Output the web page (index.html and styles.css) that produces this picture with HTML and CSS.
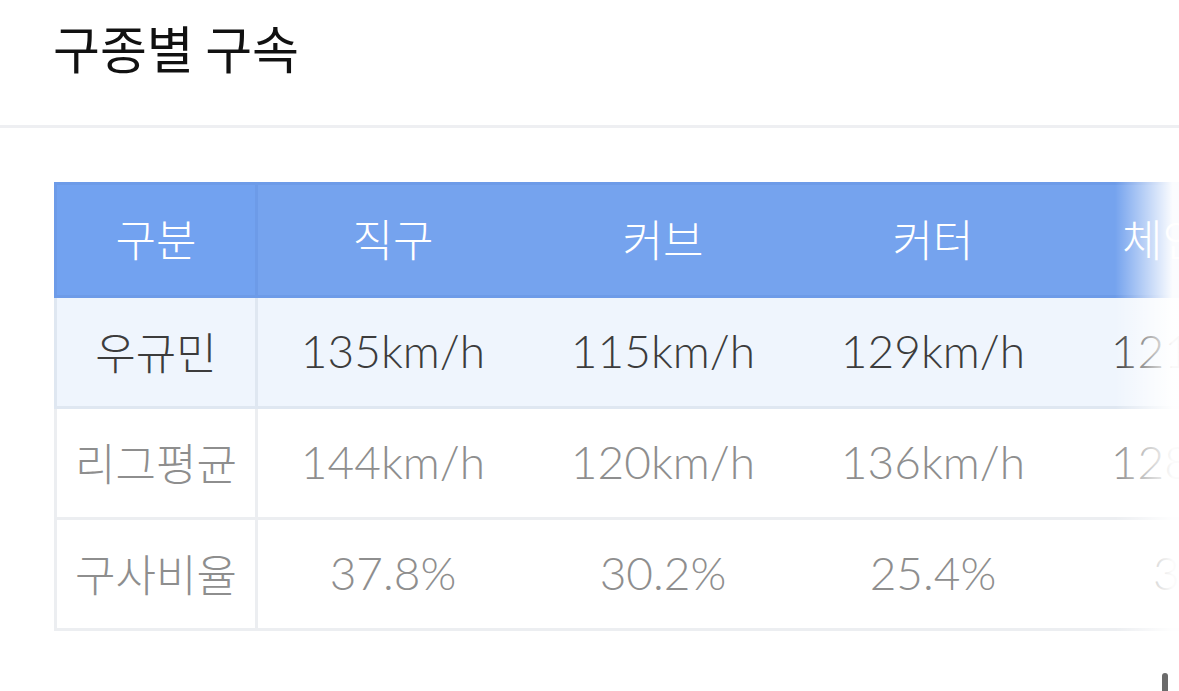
FILE: index.html
```html
<html>
   <head>
      <title>구종별 구속</title>
      <link rel="stylesheet" href="styles.css">
   </head>
   <body>
      <div class="header">
         <h1 class="title">구종별 구속</h1>
      </div>
      <div class="section">
         <div class="tablewrap">
            <table class="speed">
               <thead>
                  <tr>
                     <th class="label">구분</th>
                     <th>직구</th>
                     <th>커브</th>
                     <th>커터</th>
                     <th>체인지업</th>
                  </tr>
               </thead>
               <tbody>
                  <tr class="player">
                     <td class="label">우규민</td>
                     <td>135km/h</td>
                     <td>115km/h</td>
                     <td>129km/h</td>
                     <td>121km/h</td>
                  </tr>
                  <tr>
                     <td class="label">리그평균</td>
                     <td>144km/h</td>
                     <td>120km/h</td>
                     <td>136km/h</td>
                     <td>128km/h</td>
                  </tr>
                  <tr>
                     <td class="label">구사비율</td>
                     <td>37.8%</td>
                     <td>30.2%</td>
                     <td>25.4%</td>
                     <td>3.2%</td>
                  </tr>
               </tbody>
            </table>
            <div class="fade"></div>
         </div>
      </div>
      <div class="scrollthumb"></div>
   </body>
</html>
```

FILE: styles.css
```css
html {
   height: 100%;
   margin: 0px;
   padding: 0px;
}

body {
   margin: 0;
   font-family: "Noto Sans CJK KR", "Noto Sans", sans-serif;
   background: white;
   overflow: hidden;
}

.header {
   height: 128px;
   border-bottom: 3px solid #eeeff2;
   padding-left: 53px;
   box-sizing: border-box;
}

.title {
   margin: 0;
   padding-top: 11px;
   font-size: 51px;
   font-weight: 400;
   line-height: 72px;
   color: #111;
}

.section {
   padding-top: 54px;
   padding-left: 54px;
}

.tablewrap {
   position: relative;
   overflow: hidden;
}

.speed {
   border-collapse: collapse;
   table-layout: fixed;
   width: 1280px;
   font-family: Lato, "Noto Sans CJK KR", sans-serif;
   font-weight: 300;
   font-size: 46px;
}

.speed th,
.speed td {
   width: 270px;
   text-align: center;
   font-weight: 300;
   padding: 0 0 4px 0;
}

.speed th,
.speed .label {
   font-family: "Noto Sans CJK KR", sans-serif;
   font-size: 44px;
}

.speed .label {
   width: 198px;
   border-left: 3px solid #eceef1;
   border-right: 3px solid #eceef1;
}

.speed td.label {
   padding-bottom: 2px;
}

.speed th {
   height: 113px;
   background: #75a3ee;
   color: white;
   border-top: 3px solid #6d9be8;
   border-bottom: 3px solid #6d9be8;
}

.speed th.label {
   background: #72a2f0;
   border-left-color: #6d9be8;
   border-right-color: #6d9be8;
}

.speed td {
   height: 111px;
   color: #8e8e8e;
   border-top: 3px solid #eceef1;
   border-bottom: 3px solid #eceef1;
}

.speed .player td {
   background: #eff5fd;
   color: #3c3c3c;
   border-color: #dfe7f1;
}

.fade {
   position: absolute;
   top: 0;
   right: 0;
   width: 64px;
   height: 100%;
   background: linear-gradient(to right, rgba(255, 255, 255, 0), rgba(255, 255, 255, 0.97) 90%);
   pointer-events: none;
}

.scrollthumb {
   position: fixed;
   right: 11px;
   bottom: -6px;
   width: 6px;
   height: 24px;
   border-radius: 3px;
   background: #6b6b6b;
}
```
